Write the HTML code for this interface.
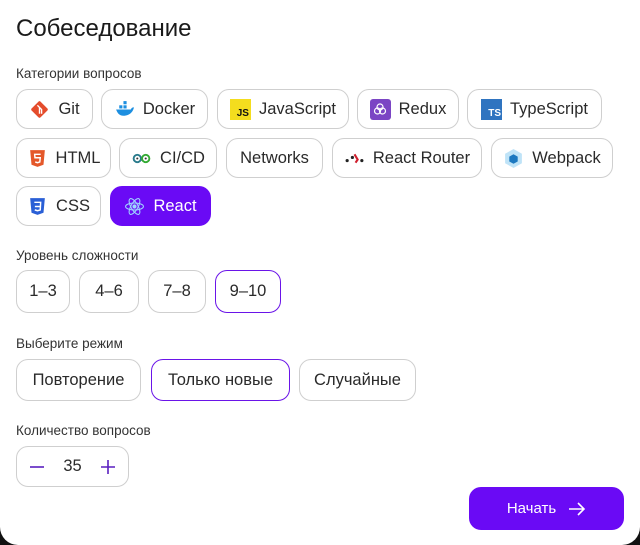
<!DOCTYPE html><html><head><meta charset="utf-8"><style>
*{box-sizing:border-box;margin:0;padding:0}
html,body{width:640px;height:545px;background:#111;overflow:hidden}
.card{position:absolute;left:0;top:0;width:640px;height:545px;background:#fff;border-radius:0 0 18px 18px;font-family:"Liberation Sans",sans-serif;color:#222}
h1{position:absolute;left:16px;top:15px;font-size:24px;font-weight:normal;color:#1a1a1a}
.lbl{position:absolute;left:16px;font-size:13.5px;color:#333}
.chip{position:absolute;height:40px;border:1px solid #cfcfcf;border-radius:12px;display:flex;align-items:center;justify-content:center;font-size:16.5px;color:#2a2a2a;gap:8px}
.sel{border:1.5px solid #6a14e8}
.act{background:#6a0af5;border-color:#6a0af5;color:#fff}
.ic{width:21px;height:21px;display:inline-flex;align-items:center;justify-content:center;font-size:10px;font-weight:bold;flex:none}
</style></head><body><div class="card">
<h1>Собеседование</h1>
<div class="lbl" style="top:66px">Категории вопросов</div>

<div class="chip" style="left:16px;top:89px;width:77px"><svg class="ic" viewBox="0 0 20 20"><rect x="4" y="4" width="12" height="12" transform="rotate(45 10 10)" fill="#e44c2c" rx="1.5"/><path d="M8 6l4 4v4M10 8v6" stroke="#fff" stroke-width="1.3" fill="none"/></svg>Git</div>
<div class="chip" style="left:101px;top:89px;width:107px"><svg class="ic" viewBox="0 0 20 20"><path d="M2 10h14c1-2 2-2 3-2-1 5-5 8-10 8-4 0-6-3-7-6z" fill="#1d8fe0"/><rect x="5" y="6" width="3" height="3" fill="#1d8fe0"/><rect x="9" y="6" width="3" height="3" fill="#1d8fe0"/><rect x="9" y="2" width="3" height="3" fill="#1d8fe0"/></svg>Docker</div>
<div class="chip" style="left:217px;top:89px;width:132px"><span class="ic" style="background:#f4dd1e;color:#111;align-items:flex-end;justify-content:flex-end;padding:0 2px 1px 0">JS</span>JavaScript</div>
<div class="chip" style="left:357px;top:89px;width:102px"><span class="ic" style="background:#7b45c4;border-radius:3px"><svg width="16" height="16" viewBox="0 0 16 16" fill="none" stroke="#fff" stroke-width="1.2"><circle cx="8" cy="6" r="3"/><circle cx="5.5" cy="10" r="3"/><circle cx="10.5" cy="10" r="3"/></svg></span>Redux</div>
<div class="chip" style="left:467px;top:89px;width:135px"><span class="ic" style="background:#2f74c0;color:#fff;align-items:flex-end;justify-content:flex-end;padding:0 1px 1px 0">TS</span>TypeScript</div>

<div class="chip" style="left:16px;top:138px;width:95px"><svg class="ic" viewBox="0 0 20 20"><path d="M3 2h14l-1.3 14L10 18l-5.7-2z" fill="#e4582a"/><path d="M13 6H7.3l.3 3.3H12.6l-.4 4L10 14l-2.2-.7" stroke="#fff" stroke-width="1.4" fill="none"/></svg>HTML</div>
<div class="chip" style="left:119px;top:138px;width:98px"><svg class="ic" viewBox="0 0 20 20"><circle cx="6" cy="10" r="3.5" fill="none" stroke="#2a7b8c" stroke-width="1.8"/><circle cx="14" cy="10" r="3.5" fill="none" stroke="#3a3" stroke-width="1.8"/><circle cx="6" cy="10" r="1" fill="#333"/><circle cx="14" cy="10" r="1" fill="#333"/></svg>CI/CD</div>
<div class="chip" style="left:226px;top:138px;width:97px">Networks</div>
<div class="chip" style="left:332px;top:138px;width:150px"><svg class="ic" viewBox="0 0 20 20"><circle cx="3" cy="12" r="1.5" fill="#222"/><circle cx="8" cy="9" r="1.5" fill="#222"/><circle cx="17" cy="12" r="1.5" fill="#222"/><path d="M10 6l3 5-2 3" stroke="#d0202e" stroke-width="2" fill="none"/></svg>React Router</div>
<div class="chip" style="left:491px;top:138px;width:122px"><svg class="ic" viewBox="0 0 20 20"><path d="M10 1l8 4.5v9L10 19l-8-4.5v-9z" fill="#bfe3f7"/><path d="M10 6l4 2.2v4.6L10 15l-4-2.2V8.2z" fill="#1c78c0"/></svg>Webpack</div>

<div class="chip" style="left:16px;top:186px;width:85px"><svg class="ic" viewBox="0 0 20 20"><path d="M3 2h14l-1.3 14L10 18l-5.7-2z" fill="#2a5fd6"/><path d="M7 6h6l-.4 7.3L10 14l-2.6-.8" stroke="#fff" stroke-width="1.4" fill="none"/><path d="M7.5 10h5" stroke="#fff" stroke-width="1.4"/></svg>CSS</div>
<div class="chip act" style="left:110px;top:186px;width:101px"><svg class="ic" viewBox="0 0 20 20" fill="none" stroke="#9fd8ff" stroke-width="1"><ellipse cx="10" cy="10" rx="8.5" ry="3.3"/><ellipse cx="10" cy="10" rx="8.5" ry="3.3" transform="rotate(60 10 10)"/><ellipse cx="10" cy="10" rx="8.5" ry="3.3" transform="rotate(120 10 10)"/><circle cx="10" cy="10" r="1.5" fill="#9fd8ff"/></svg>React</div>

<div class="lbl" style="top:248px">Уровень сложности</div>
<div class="chip" style="left:16px;top:270px;width:54px;height:43px">1–3</div>
<div class="chip" style="left:79px;top:270px;width:60px;height:43px">4–6</div>
<div class="chip" style="left:148px;top:270px;width:58px;height:43px">7–8</div>
<div class="chip sel" style="left:215px;top:270px;width:66px;height:43px">9–10</div>

<div class="lbl" style="top:336px">Выберите режим</div>
<div class="chip" style="left:16px;top:359px;width:125px;height:42px">Повторение</div>
<div class="chip sel" style="left:151px;top:359px;width:139px;height:42px">Только новые</div>
<div class="chip" style="left:299px;top:359px;width:117px;height:42px">Случайные</div>

<div class="lbl" style="top:423px">Количество вопросов</div>
<div class="chip" style="left:16px;top:446px;width:113px;height:41px;justify-content:space-around;padding:0 6px"><svg width="18" height="18" viewBox="0 0 18 18"><path d="M2 9h14" stroke="#5a1fc0" stroke-width="1.6"/></svg><span>35</span><svg width="18" height="18" viewBox="0 0 18 18"><path d="M2 9h14M9 2v14" stroke="#5a1fc0" stroke-width="1.6"/></svg></div>

<div class="chip act" style="left:469px;top:487px;width:155px;height:43px;font-size:15px;gap:12px">Начать<svg width="18" height="16" viewBox="0 0 18 16" fill="none" stroke="#fff" stroke-width="1.6"><path d="M1 8h15M10 2l6 6-6 6"/></svg></div>
</div></body></html>
